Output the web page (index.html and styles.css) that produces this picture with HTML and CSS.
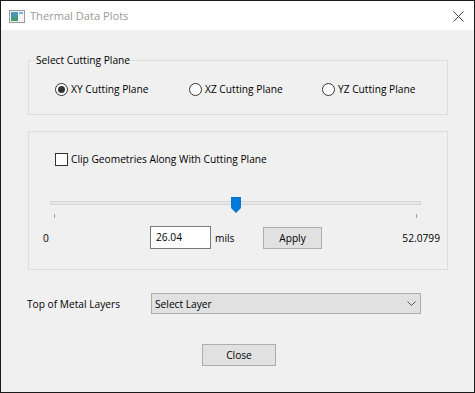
FILE: index.html
```html
<!DOCTYPE html>
<html lang="en">
<head>
  <meta charset="UTF-8" />
  <title>Thermal Data Plots</title>
  <link rel="stylesheet" href="styles.css">
</head>
<body>

<div class="window">
  <div class="titlebar">
    <svg class="app-icon" width="16" height="13" viewBox="0 0 16 13">
      <defs>
        <linearGradient id="pane" x1="0" y1="0" x2="0" y2="1">
          <stop offset="0" stop-color="#4a9ad0"/>
          <stop offset="1" stop-color="#3f9a5a"/>
        </linearGradient>
      </defs>
      <rect x="0.5" y="0.5" width="15" height="12" fill="#f4f4f4" stroke="#9a9a9a"/>
      <rect x="2" y="2" width="7" height="9" fill="url(#pane)"/>
      <rect x="10" y="2" width="4" height="2" fill="#7fb3d6"/>
    </svg>
    <span class="title">Thermal Data Plots</span>
    <svg class="close-x" width="11" height="11" viewBox="0 0 11 11">
      <path d="M0.5 0.5 L10.5 10.5 M10.5 0.5 L0.5 10.5" stroke="#444" stroke-width="1"/>
    </svg>
  </div>

  <div class="client">
    <fieldset class="plane-group">
      <legend>Select Cutting Plane</legend>
      <div class="radio-row">
        <label class="radio-item"><span class="radio checked"></span>XY Cutting Plane</label>
        <label class="radio-item"><span class="radio"></span>XZ Cutting Plane</label>
        <label class="radio-item"><span class="radio"></span>YZ Cutting Plane</label>
      </div>
    </fieldset>

    <div class="clip-group">
      <label class="check-item"><span class="checkbox"></span>Clip Geometries Along With Cutting Plane</label>

      <div class="slider">
        <div class="track"></div>
        <svg class="thumb" style="left: 181px" width="10" height="16" viewBox="0 0 10 16">
          <path d="M0 0 H10 V11 L5 16 L0 11 Z" fill="#0078d7"/>
        </svg>
      </div>
      <div class="ticks"><span></span><span></span></div>

      <div class="value-row">
        <span class="min">0</span>
        <div class="textbox">26.04</div>
        <span class="unit">mils</span>
        <button class="btn apply">Apply</button>
        <span class="max">52.0799</span>
      </div>
    </div>

    <div class="layer-row">
      <span class="layer-label">Top of Metal Layers</span>
      <div class="combo">
        <span>Select Layer</span>
        <svg width="9" height="5" viewBox="0 0 9 5">
          <path d="M0.5 0.5 L4.5 4.5 L8.5 0.5" fill="none" stroke="#555" stroke-width="1"/>
        </svg>
      </div>
    </div>

    <div class="close-row">
      <button class="btn close">Close</button>
    </div>
  </div>
</div>

</body>
</html>
```

FILE: styles.css
```css
* {
  box-sizing: border-box;
}

body {
  margin: 0;
  background: #fff;
  font-family: "Open Sans", "Noto Sans", sans-serif;
  font-size: 10.2px;
  color: #000;
}

.window {
  width: 475px;
  height: 393px;
  border: 1px solid #1a1a1a;
  display: flex;
  flex-direction: column;
}

.titlebar {
  height: 29px;
  flex: none;
  display: flex;
  align-items: center;
  padding: 0 10px 0 8px;
  background: #fff;
}

.app-icon {
  margin-top: 1px;
}

.title {
  margin-left: 5px;
  font-size: 11.1px;
  color: #999;
}

.close-x {
  margin-left: auto;
  margin-top: 1px;
}

.client {
  flex: 1;
  background: #f0f0f0;
}

/* group boxes */
.plane-group {
  margin: 23px 0 0 27px;
  width: 420px;
  padding: 15px 0 18px 0;
  border: 1px solid #dcdcdc;
  min-width: 0;
}

.plane-group legend {
  margin-left: 5px;
  padding: 0 2px;
  line-height: 14px;
}

.radio-row {
  display: grid;
  grid-template-columns: 134px 133px auto;
  height: 14px;
  padding-left: 26px;
}

.radio-item,
.check-item {
  display: flex;
  align-items: center;
  gap: 3px;
  line-height: 14px;
}

.radio {
  width: 13px;
  height: 13px;
  border: 1px solid #333;
  border-radius: 50%;
  background: #fff;
  display: flex;
  align-items: center;
  justify-content: center;
}

.radio.checked::after {
  content: "";
  width: 7px;
  height: 7px;
  border-radius: 50%;
  background: #333;
}

.checkbox {
  width: 13px;
  height: 13px;
  border: 1px solid #333;
  background: #fff;
}

.clip-group {
  margin: 16px 0 0 27px;
  width: 420px;
  height: 139px;
  border: 1px solid #dcdcdc;
  padding: 20px 0 0 26px;
}

/* slider */
.slider {
  position: relative;
  margin: 31px 0 0 -5px;
  width: 371px;
  height: 16px;
}

.track {
  position: relative;
  top: 4px;
  height: 4px;
  border: 1px solid #d6d6d6;
  background: #e7e7e7;
}

.thumb {
  position: absolute;
  top: 0;
}

.ticks {
  display: flex;
  justify-content: space-between;
  width: 371px;
  margin: 1px 0 0 -5px;
  padding: 0 4px;
}

.ticks span {
  width: 1px;
  height: 4px;
  background: #a0a0a0;
}

.value-row {
  display: flex;
  align-items: center;
  margin: 8px 0 0 -12px;
  padding-right: 7px;
  height: 23px;
}

.min {
  width: 107px;
}

.textbox {
  width: 61px;
  height: 23px;
  border: 1px solid #7a7a7a;
  background: #fff;
  padding-left: 5px;
  line-height: 21px;
}

.unit {
  margin-left: 4px;
  width: 48px;
}

.btn {
  font: inherit;
  color: #000;
  background: #e1e1e1;
  border: 1px solid #adadad;
  padding: 0;
}

.apply {
  width: 59px;
  height: 22px;
}

.max {
  margin-left: auto;
}

/* bottom rows */
.layer-row {
  display: flex;
  align-items: center;
  margin-top: 23px;
  padding-left: 26px;
}

.layer-label {
  width: 124px;
}

.combo {
  width: 270px;
  height: 21px;
  display: flex;
  align-items: center;
  justify-content: space-between;
  background: #e1e1e1;
  border: 1px solid #adadad;
  padding: 0 4px 0 3px;
}

.close-row {
  margin-top: 30px;
  padding-left: 201px;
}

.close {
  width: 74px;
  height: 22px;
}
```
